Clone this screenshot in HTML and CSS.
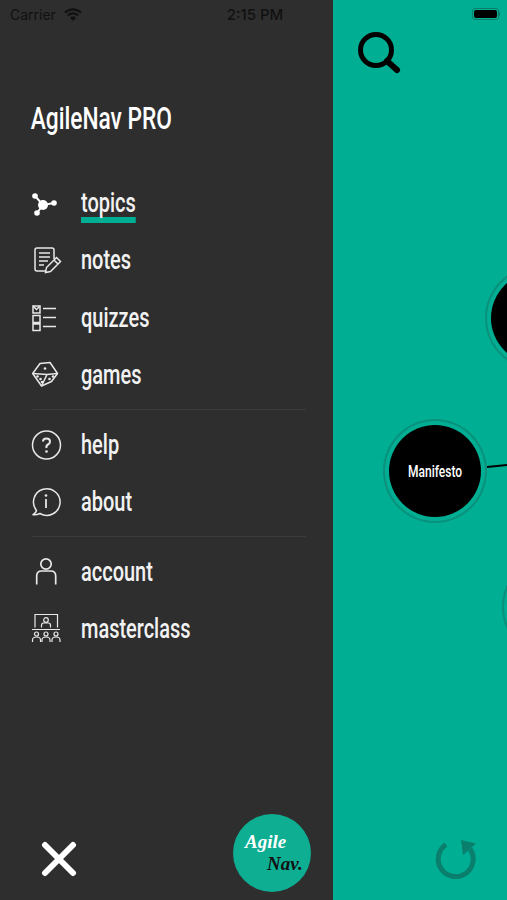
FILE: index.html
```html
<!DOCTYPE html>
<html lang="en">
<head>
    <meta charset="UTF-8">
    <meta name="viewport" content="width=device-width, initial-scale=1.0">
    <title>AgileNav PRO</title>
    <link rel="stylesheet" href="styles.css">
</head>
<body>
    <div class="screen">
        <div class="status-bar">
            <div class="status-left">
                <span>Carrier</span>
                <svg class="wifi" viewBox="0 0 18 13">
                    <path d="M1 4.600a11.500 11.500 0 0 1 16 0M3.800 7.500a7.500 7.500 0 0 1 10.400 0" fill="none" stroke="#111" stroke-width="2.200"/>
                    <path d="M6 9.800a4.200 4.200 0 0 1 6 0L9 13z" fill="#111"/>
                </svg>
            </div>
            <div class="status-time">2:15 PM</div>
            <div class="status-right">
                <div class="battery"><div class="battery-level"></div></div>
                <div class="battery-tip"></div>
            </div>
        </div>

        <aside class="drawer">
            <h1 class="brand">AgileNav PRO</h1>

            <nav class="menu">
                <a class="menu-item">
                    <svg class="menu-icon" viewBox="0 0 32 32">
                        <path d="M5 9L13 18L24 16M13 18L7 26" fill="none" stroke="#fff" stroke-width="2"/>
                        <circle cx="13" cy="18" r="5" fill="#fff"/>
                        <circle cx="5" cy="9" r="2.800" fill="#fff"/>
                        <circle cx="24" cy="16" r="2.800" fill="#fff"/>
                        <circle cx="7" cy="26" r="2.800" fill="#fff"/>
                    </svg>
                    <span class="menu-label active">topics</span>
                </a>
                <a class="menu-item">
                    <svg class="menu-icon" viewBox="0 0 32 32">
                        <path d="M16 27H7q-2 0-2-2V6q0-2 2-2h15q2 0 2 2v9" fill="none" stroke="#e8e8e8" stroke-width="1.500"/>
                        <path d="M9 9h11M9 13h11M9 17h9M9 21h5" stroke="#e8e8e8" stroke-width="1.500"/>
                        <path d="M26.500 13.500l4 4-10 10-5 1 1-5z M24 16l4 4" fill="none" stroke="#e8e8e8" stroke-width="1.500"/>
                    </svg>
                    <span class="menu-label">notes</span>
                </a>
                <a class="menu-item">
                    <svg class="menu-icon" viewBox="0 0 32 32">
                        <path d="M3 4h7v7H3zM3 13.500h7v7H3zM3 22h7v6.500H3z" fill="none" stroke="#e8e8e8" stroke-width="1.500"/>
                        <path d="M3 4l3.500 3.500L10 4" fill="none" stroke="#e8e8e8" stroke-width="1.500"/>
                        <path d="M13 6.500h13M13 15.500h13M13 24.500h13" stroke="#e8e8e8" stroke-width="1.500"/>
                    </svg>
                    <span class="menu-label">quizzes</span>
                </a>
                <a class="menu-item">
                    <svg class="menu-icon" viewBox="0 0 32 32">
                        <path d="M10 4.500L20 3.500L27.500 14.500L21.500 22.500L11.500 27L2.700 14.500z" fill="none" stroke="#e8e8e8" stroke-width="1.500" stroke-linejoin="round"/>
                        <path d="M2.700 14.500L17 15.500L27.500 14.500M17 15.500L11.500 27" fill="none" stroke="#e8e8e8" stroke-width="1.500"/>
                        <circle cx="7.500" cy="17.500" r="1.300" fill="#e8e8e8"/>
                        <circle cx="10.500" cy="20" r="1.300" fill="#e8e8e8"/>
                        <circle cx="12" cy="23" r="1.300" fill="#e8e8e8"/>
                        <circle cx="19.500" cy="20" r="1.300" fill="#e8e8e8"/>
                        <circle cx="23" cy="17.500" r="1.300" fill="#e8e8e8"/>
                        <circle cx="15" cy="9.500" r="1.300" fill="#e8e8e8"/>
                    </svg>
                    <span class="menu-label">games</span>
                </a>
            </nav>

            <div class="divider"></div>

            <nav class="menu">
                <a class="menu-item">
                    <svg class="menu-icon" viewBox="0 0 32 32">
                        <circle cx="16.500" cy="16" r="14" fill="none" stroke="#e8e8e8" stroke-width="1.500"/>
                        <path d="M13 12.500q0-3 3.500-3t3.500 3q0 2-2 3t-1.500 3.500" fill="none" stroke="#e8e8e8" stroke-width="2"/>
                        <circle cx="16.500" cy="22.500" r="1.300" fill="#e8e8e8"/>
                    </svg>
                    <span class="menu-label">help</span>
                </a>
                <a class="menu-item">
                    <svg class="menu-icon" viewBox="0 0 32 32">
                        <path d="M6.500 24.500A13.300 13.300 0 1 1 10 27.500Q7 29 3 28.700Q6 27 6.500 24.500z" fill="none" stroke="#e8e8e8" stroke-width="1.500" stroke-linejoin="round"/>
                        <path d="M16 13v9" stroke="#e8e8e8" stroke-width="1.800"/>
                        <circle cx="16" cy="9.500" r="1.300" fill="#e8e8e8"/>
                    </svg>
                    <span class="menu-label">about</span>
                </a>
            </nav>

            <div class="divider"></div>

            <nav class="menu">
                <a class="menu-item">
                    <svg class="menu-icon" viewBox="0 0 32 32">
                        <circle cx="16" cy="8" r="5.200" fill="none" stroke="#e8e8e8" stroke-width="1.700"/>
                        <path d="M6.700 28.500V20q0-5 5-5h9q5 0 5 5v8.500" fill="none" stroke="#e8e8e8" stroke-width="1.700"/>
                    </svg>
                    <span class="menu-label">account</span>
                </a>
                <a class="menu-item">
                    <svg class="menu-icon" viewBox="0 0 32 32">
                        <path d="M5 14.500V1.500h22.500v13" fill="none" stroke="#e8e8e8" stroke-width="1.200"/>
                        <circle cx="16" cy="7" r="2.300" fill="none" stroke="#e8e8e8" stroke-width="1.200"/>
                        <path d="M11.500 14.500v-2q0-2.500 2-2.500h5q2 0 2 2.500v2M2 16.500h28" fill="none" stroke="#e8e8e8" stroke-width="1.200"/>
                        <circle cx="6.500" cy="21" r="2" fill="none" stroke="#e8e8e8" stroke-width="1.200"/>
                        <circle cx="16" cy="21" r="2" fill="none" stroke="#e8e8e8" stroke-width="1.200"/>
                        <circle cx="26" cy="21" r="2" fill="none" stroke="#e8e8e8" stroke-width="1.200"/>
                        <path d="M2.500 29v-2q0-3 4-3t4 3v2M12 29v-2q0-3 4-3t4 3v2M22 29v-2q0-3 4-3t4 3v2" fill="none" stroke="#e8e8e8" stroke-width="1.200"/>
                    </svg>
                    <span class="menu-label">masterclass</span>
                </a>
            </nav>

            <div class="drawer-footer">
                <svg class="close-icon" viewBox="0 0 36 36">
                    <path d="M4 4l28 28M32 4L4 32" stroke="#fff" stroke-width="6" stroke-linecap="round"/>
                </svg>
                <div class="logo">
                    <span class="logo-agile">Agile</span>
                    <span class="logo-nav">Nav.</span>
                </div>
            </div>
        </aside>

        <main class="map">
            <svg class="map-lines" viewBox="0 0 174 900">
                <path d="M154 467L174 465" stroke="#000" stroke-width="2"/>
            </svg>
            <svg class="search-icon" viewBox="0 0 44 44">
                <circle cx="19" cy="19" r="15.500" fill="none" stroke="#000" stroke-width="5"/>
                <path d="M30 30L40 39" stroke="#000" stroke-width="6" stroke-linecap="round"/>
            </svg>
            <div class="node node-manifesto"><span class="node-label">Manifesto</span></div>
            <div class="node node-top"></div>
            <div class="node node-bottom"></div>
            <svg class="refresh-icon" viewBox="0 0 44 48">
                <path d="M12 9.500A17.500 17.500 0 1 0 36 14" fill="none" stroke="#0a7f6d" stroke-width="5"/>
                <path d="M27 5L42 8.500L29 20z" fill="#0a7f6d"/>
            </svg>
        </main>
    </div>
</body>
</html>
```

FILE: styles.css
```css
* {
    margin: 0;
    padding: 0;
    box-sizing: border-box;
}

body {
    font-family: 'Roboto', sans-serif;
    background: #00ae93;
}

.screen {
    position: relative;
    display: flex;
    width: 507px;
    height: 900px;
    overflow: hidden;
}

.status-bar {
    position: absolute;
    top: 0;
    left: 0;
    width: 100%;
    height: 28px;
    display: grid;
    grid-template-columns: 1fr auto 1fr;
    align-items: center;
    padding: 0 7px 0 10px;
    font-family: 'Inter', sans-serif;
    font-size: 14px;
    color: #111;
}

.status-left {
    display: flex;
    align-items: center;
    gap: 8px;
}

.status-time {
    font-size: 15px;
    font-weight: 500;
}

.wifi {
    width: 18px;
    height: 13px;
}

.status-right {
    display: flex;
    align-items: center;
    justify-content: flex-end;
}

.battery {
    width: 27px;
    height: 12px;
    border: 1px solid #0a7f6d;
    border-radius: 3px;
    padding: 1px;
}

.battery-level {
    height: 100%;
    background: #000;
    border-radius: 2px;
}

.battery-tip {
    width: 1px;
    height: 4px;
    background: #0a7f6d;
}

.drawer {
    width: 333px;
    height: 100%;
    flex-shrink: 0;
    display: flex;
    flex-direction: column;
    background: #2e2e2e;
    padding: 99px 0 0 30px;
}

/* the real font is much narrower than anything installed, so squeeze it */
.brand {
    height: 75px;
    padding-left: 1px;
    font-size: 32px;
    font-weight: 500;
    line-height: 38px;
    color: #fff;
    white-space: nowrap;
    transform: scaleX(0.71);
    transform-origin: left center;
}

.menu-item {
    height: 57.5px;
    display: flex;
    align-items: center;
    gap: 19px;
}

.menu-icon {
    width: 32px;
    height: 32px;
    flex-shrink: 0;
}

.menu-label {
    font-size: 27px;
    font-weight: 500;
    line-height: 34px;
    color: #f2f2f2;
    transform: scaleX(0.74);
    transform-origin: left center;
}

.menu-label.active {
    margin-top: 6px;
    border-bottom: 6px solid #00ae93;
    line-height: 28px;
}

.divider {
    width: 274px;
    height: 1px;
    margin: 5px 0 6px 2px;
    background: #3c3c3c;
}

.drawer-footer {
    margin-top: auto;
    display: flex;
    justify-content: space-between;
    align-items: center;
    padding: 0 22px 8px 11px;
}

.close-icon {
    width: 36px;
    height: 36px;
    margin-top: 12px;
}

.logo {
    width: 78px;
    height: 78px;
    display: flex;
    flex-direction: column;
    justify-content: center;
    border-radius: 50%;
    background: #0eae93;
    font-family: 'Liberation Serif', serif;
    font-style: italic;
    font-weight: bold;
    font-size: 19px;
    line-height: 22px;
}

.logo-agile {
    padding-left: 12px;
    color: #fff;
}

.logo-nav {
    padding-left: 34px;
    color: #111;
}

.map {
    position: relative;
    flex: 1;
}

.map-lines {
    position: absolute;
    top: 0;
    left: 0;
    width: 174px;
    height: 900px;
}

.search-icon {
    position: absolute;
    top: 31px;
    left: 24px;
    width: 44px;
    height: 44px;
}

.node {
    position: absolute;
    width: 92px;
    height: 92px;
    display: flex;
    align-items: center;
    justify-content: center;
    border-radius: 50%;
    background: #000;
    box-shadow: 0 0 0 4px #00ae93, 0 0 0 6px #0a917c;
    font-size: 16px;
    font-weight: 500;
    color: #fff;
}

.node-label {
    transform: scaleX(0.75);
}

.node-manifesto {
    top: 425px;
    left: 56px;
}

.node-top {
    top: 272px;
    left: 158px;
}

.node-bottom {
    top: 561px;
    left: 175px;
}

.refresh-icon {
    position: absolute;
    top: 835px;
    left: 101px;
    width: 44px;
    height: 48px;
}
```
